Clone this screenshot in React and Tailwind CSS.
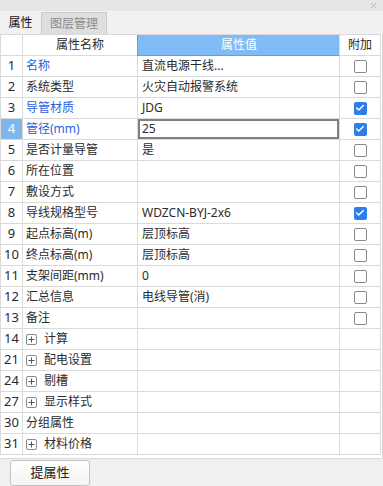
import { Check, X } from "lucide-react";

const rows = [
  { no: "1", name: "名称", value: "直流电源干线...", blue: true, check: false },
  { no: "2", name: "系统类型", value: "火灾自动报警系统", check: false },
  { no: "3", name: "导管材质", value: "JDG", blue: true, check: true },
  { no: "4", name: "管径(mm)", value: "25", blue: true, check: true, active: true },
  { no: "5", name: "是否计量导管", value: "是", check: false },
  { no: "6", name: "所在位置", value: "", check: false },
  { no: "7", name: "敷设方式", value: "", check: false },
  { no: "8", name: "导线规格型号", value: "WDZCN-BYJ-2x6", check: true },
  { no: "9", name: "起点标高(m)", value: "层顶标高", check: false },
  { no: "10", name: "终点标高(m)", value: "层顶标高", check: false },
  { no: "11", name: "支架间距(mm)", value: "0", check: false },
  { no: "12", name: "汇总信息", value: "电线导管(消)", check: false },
  { no: "13", name: "备注", value: "", check: false },
  { no: "14", name: "计算", group: true },
  { no: "21", name: "配电设置", group: true },
  { no: "24", name: "剔槽", group: true },
  { no: "27", name: "显示样式", group: true },
  { no: "30", name: "分组属性", plain: true },
  { no: "31", name: "材料价格", group: true },
];

// 复选框
const Box = ({ checked }) =>
  checked ? (
    <span className="w-[13px] h-[13px] rounded-[2px] bg-[#2d7ee8] flex items-center justify-center">
      <Check size={10} strokeWidth={3.5} className="text-white" />
    </span>
  ) : (
    <span className="w-[13px] h-[13px] rounded-[2px] border border-[#8a8a8a] bg-white" />
  );

// 展开按钮
const Plus = () => (
  <span className="w-[11px] h-[11px] mr-[7px] rounded-[2px] border border-[#8a8a8a] flex items-center justify-center">
    <svg width="7" height="7" viewBox="0 0 7 7">
      <path d="M3.5 0.5v6M0.5 3.5h6" stroke="#555" strokeWidth="1" />
    </svg>
  </span>
);

const App = () => {
  return (
    <div
      className="w-[383px] h-[486px] bg-[#f0f0f0] overflow-hidden text-[12px] text-[#2b2b2b]"
      style={{ fontFamily: '"Noto Sans", "Noto Sans CJK SC", sans-serif' }}
    >
      {/* 标题栏 */}
      <div className="h-[11px] bg-[#e6e6e6] flex items-center justify-end pr-[5px]">
        <X size={9} strokeWidth={1.5} className="text-[#9a9a9a]" />
      </div>

      {/* 页签 */}
      <div className="h-[23px] flex items-end">
        <div className="w-[41px] h-[23px] flex items-center justify-center text-[#111]">属性</div>
        <div className="w-[66px] h-[22px] flex items-center justify-center bg-[#dedede] border border-[#cdcdcd] border-b-0 text-[#8c8c8c]">
          图层管理
        </div>
      </div>

      {/* 属性表 */}
      <div className="w-[383px] pr-[1px] pb-[3px] border-r border-b border-[#d9d9d9] bg-white">
        <div className="grid grid-cols-[23px_115px_202px_41px] auto-rows-[21px] border-t border-[#d9d9d9]">
          <div className="border-l border-r border-b border-[#dadada]" />
          <div className="border-r border-b border-[#dadada] flex items-center justify-center">属性名称</div>
          <div className="bg-[#80bbf7] border-l border-b border-[#5d9ee6] -ml-[1px] flex items-center justify-center text-white">
            属性值
          </div>
          <div className="border-r border-b border-l border-[#dadada] -ml-[1px] flex items-center justify-center">附加</div>

          {rows.map((r) => (
            <div key={r.no} className="contents">
              <div
                className={
                  "border-l border-r border-b border-[#dadada] flex items-center justify-center text-[13px] " +
                  (r.active ? "bg-[#80b6ee] text-white" : "")
                }
              >
                {r.no}
              </div>
              <div className="border-r border-b border-[#dadada] flex items-center pl-[3px] whitespace-nowrap">
                {r.group && <Plus />}
                <span className={r.blue ? "text-[#2b5fe0]" : ""}>{r.name}</span>
              </div>
              <div
                className={
                  "border-r border-b border-[#dadada] flex items-center pl-[4px] whitespace-nowrap " +
                  (r.active ? "shadow-[inset_0_0_0_2px_#808080]" : "")
                }
              >
                {r.value}
              </div>
              <div className="border-r border-b border-[#dadada] flex items-center justify-center">
                {r.check !== undefined && <Box checked={r.check} />}
              </div>
            </div>
          ))}
        </div>
      </div>

      {/* 按钮 */}
      <div className="pt-[1px] pl-[10px]">
        <button className="w-[80px] h-[26px] rounded-[3px] border border-[#c4c4c4] bg-gradient-to-b from-white to-[#f4f4f4] text-[13px] text-[#222]">
          提属性
        </button>
      </div>
    </div>
  );
};

export default App;
